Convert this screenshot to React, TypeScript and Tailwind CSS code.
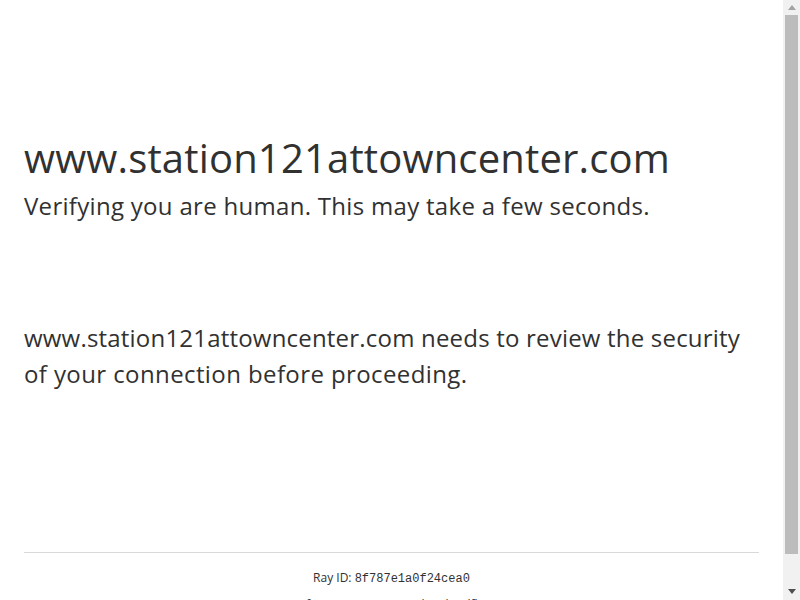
export default function App() {
  const sans = { fontFamily: '"Open Sans", "Noto Sans", sans-serif' };
  return (
    <div className="flex h-screen bg-white text-[#313131]" style={sans}>
      <div className="flex-1 overflow-hidden">
        <div className="mx-auto max-w-[60rem] px-6 pt-32 pb-32">
          <h1 className="text-[40px] leading-[60px] font-normal tracking-[0.17px]">
            www.station121attowncenter.com
          </h1>
          <h2 className="text-2xl leading-9 font-normal tracking-[0.3px]">
            Verifying you are human. This may take a few seconds.
          </h2>
          <div className="mt-[96px] mb-[32px] text-2xl leading-9 tracking-[0.2px]">
            www.station121attowncenter.com needs to review the security
            <br />
            <span className="tracking-[0.4px]">of your connection before proceeding.</span>
          </div>
        </div>
        <div className="mx-auto max-w-[60rem] px-6 text-xs leading-[18px]">
          <div className="border-t border-[#d9d9d9] pt-4 pb-4 text-center">
            <div className="mb-[9px]">
              Ray ID:{" "}
              <code className="font-['Liberation_Mono',monospace] text-xs">8f787e1a0f24cea0</code>
            </div>
            <div>
              Performance &amp; security by{" "}
              <a className="text-[#313131]" href="#">Cloudflare</a>
            </div>
          </div>
        </div>
      </div>

      {/* scrollbar */}
      <div className="flex w-[17px] shrink-0 flex-col bg-[#f1f1f1]">
        <div className="flex h-[15px] items-center justify-center">
          <svg width="8" height="5" viewBox="0 0 8 5">
            <path d="M4 0 L8 5 L0 5 Z" fill="#a3a3a3" />
          </svg>
        </div>
        <div className="flex-1 px-[2px]">
          <div className="h-[539px] bg-[#bcbcbc]" />
        </div>
        <div className="flex h-[17px] items-center justify-center">
          <svg width="8" height="5" viewBox="0 0 8 5">
            <path d="M0 0 L8 0 L4 5 Z" fill="#505050" />
          </svg>
        </div>
      </div>
    </div>
  );
}
